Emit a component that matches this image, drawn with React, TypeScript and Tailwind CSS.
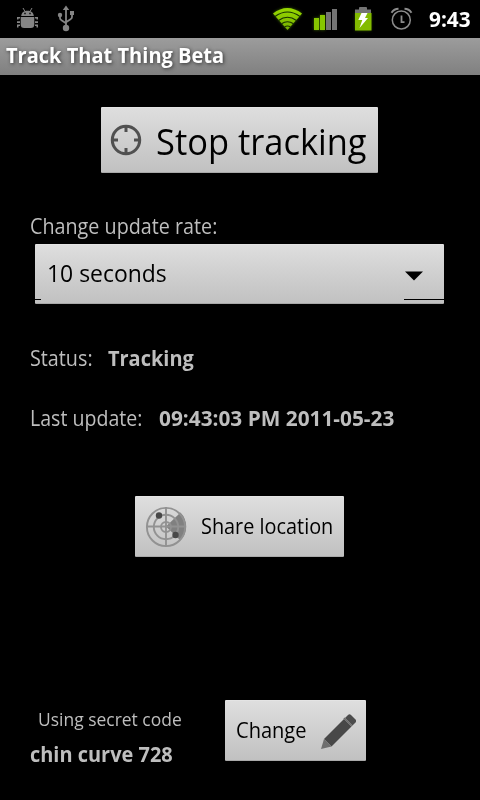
import type { ReactNode } from "react";

function Panel({ className, children }: { className: string; children: ReactNode }) {
  return (
    <div
      className={`flex items-center rounded-[1px] border-t border-b border-t-[#e4e4e4] border-b-[#a9a9a9] bg-linear-to-b from-[#dedede] to-[#c1c1c1] text-black ${className}`}
    >
      {children}
    </div>
  );
}

/* One line of text, condensed horizontally from its left edge. */
function Line({ className, children }: { className: string; children: ReactNode }) {
  return <span className={`block shrink-0 origin-left whitespace-nowrap ${className}`}>{children}</span>;
}

function BugIcon() {
  return (
    <svg className="ml-4 h-7 w-6 shrink-0" viewBox="16 5 24 28" fill="#858585">
      <path d="M21.200 16C21.500 12.500 24 10.800 27.500 10.800s6 1.700 6.300 5.200z" />
      <path d="M23 8l2 3.500M32 8l-2 3.500" fill="none" stroke="#858585" strokeWidth="1" />
      <path d="M20.700 17h13.600v7.500q0 3.500-3.500 3.500h-6.600q-3.500 0-3.500-3.500z" />
      <path d="M17 17h3v1.600h-1.500v1H17zM17 21.300h3v1.600h-3zM17 27.500v-3h3v1.500h-1.500v1.500zM38 17h-3v1.600h1.500v1H38zM38 21.300h-3v1.600h3zM38 27.500v-3h-3v1.500h1.500v1.500z" />
      <path d="M24.300 13.500h1.400M29.300 13.500h1.400" stroke="#000" strokeWidth="1.300" />
    </svg>
  );
}

function UsbIcon() {
  return (
    <svg className="ml-4 h-7 w-5 shrink-0" viewBox="56 5 20 28" fill="#858585">
      <path d="M66 5.500l3.200 4.500h-6.400z" />
      <circle cx="66" cy="28" r="3.200" />
      <circle cx="60" cy="15" r="2.200" />
      <path d="M70 11h4v4h-4z" />
      <path d="M66 9v18M60 15v3q0 1.500 1.500 2.200l4.500 3M72 14v3q0 1.500-1.500 2.200l-4.500 3" fill="none" stroke="#858585" strokeWidth="1.800" />
    </svg>
  );
}

function WifiIcon() {
  return (
    <svg className="h-[38px] w-9 shrink-0" viewBox="269 0 36 38">
      <defs>
        <linearGradient id="lime" x1="0" y1="0" x2="0" y2="1">
          <stop offset="0" stopColor="#98d800" />
          <stop offset="1" stopColor="#75b000" />
        </linearGradient>
        <filter id="glow" x="-30%" y="-30%" width="160%" height="160%">
          <feGaussianBlur stdDeviation="1.500" />
        </filter>
      </defs>
      <path d="M273 13.500Q287.300 2.500 302 13.500L287.500 30z" fill="#5c9900" opacity=".6" filter="url(#glow)" />
      <path d="M273 13.500Q287.300 2.500 302 13.500L287.500 30z" fill="url(#lime)" />
      <g fill="none" stroke="#173000" strokeWidth="1.100">
        <path d="M275 16.500q12.400-9 25 0" />
        <path d="M278.500 20.500q9-6.500 18 0" />
        <path d="M281.500 23.800q6-4 12 0" />
        <path d="M284.500 27q3-2 6 0" />
      </g>
    </svg>
  );
}

function SignalIcon() {
  return (
    <svg className="ml-1 h-[38px] w-8 shrink-0" viewBox="309 0 32 38">
      <path d="M314 18h5v12h-5zM320 15h5v15h-5z" fill="#5c9900" opacity=".7" filter="url(#glow)" />
      <path d="M314 18h5v12h-5zM320 15h5v15h-5z" fill="#87c600" />
      <path d="M326 12h5v18h-5zM332 9h5v21h-5z" fill="#747474" />
    </svg>
  );
}

function BatteryIcon() {
  return (
    <svg className="ml-2 h-[38px] w-7 shrink-0" viewBox="349 0 28 38">
      <path d="M355 12.500h16v18h-16z" fill="#5c9900" opacity=".5" filter="url(#glow)" />
      <path d="M355 9.500h4V8q0-1 1-1h6q1 0 1 1v1.500h4V13h-16z" fill="#747474" />
      <path d="M355 13h16.500v17.500H355z" fill="#83bb00" />
      <path d="M361.500 13h6l-2.500 5h3l-8.500 10 2.800-8h-4z" fill="#fff" />
    </svg>
  );
}

function AlarmIcon() {
  return (
    <svg className="ml-2.5 h-[38px] w-7 shrink-0" viewBox="387 0 28 38" fill="none" stroke="#8c8c8c" strokeWidth="1.500">
      <circle cx="401.300" cy="20" r="9" />
      <path d="M401.500 15.500v6.700h3" strokeWidth="1.800" />
      <path d="M391.500 12.700q2.500-4 7-4M411.500 12.700q-2.500-4-7-4" strokeWidth="1.900" />
    </svg>
  );
}

function CrosshairIcon() {
  return (
    <svg className="ml-[9px] h-8 w-8 shrink-0" viewBox="110 124 32 32" fill="none" stroke="#505050">
      <circle cx="126" cy="140" r="13.700" strokeWidth="3" />
      <path d="M126 126v6M126 148v6M112 140h6M134 140h6" strokeWidth="3" />
    </svg>
  );
}

function RadarIcon() {
  return (
    <svg className="ml-[10px] h-[42px] w-[42px] shrink-0" viewBox="145 505 42 42" fill="none" stroke="#929292">
      <path d="M166 525.500L180.500 511.500A20 20 0 0 1 180.500 539.500z" fill="#808080" stroke="none" />
      <g strokeWidth="1.900">
        <circle cx="166" cy="526" r="19.100" />
        <circle cx="166" cy="526" r="12.200" />
        <circle cx="166" cy="526" r="5" />
        <path d="M166 506v39M146.500 525.500h39" />
      </g>
      <circle cx="159" cy="514.500" r="3.200" fill="#484848" stroke="none" />
      <circle cx="175.500" cy="534" r="3.200" fill="#484848" stroke="none" />
    </svg>
  );
}

function PencilIcon() {
  return (
    <svg className="h-9 w-9 shrink-0" viewBox="320 712 36 36">
      <path d="M324 738l20-20 7.500 7.500-20 20z" fill="#484848" />
      <path d="M345 717l3-3q1.500-1.500 3 0l4.500 4.500q1.500 1.500 0 3l-3 3z" fill="#4c4c4c" />
      <path d="M344 717l8 8" stroke="#6c6c6c" strokeWidth="1.700" />
      <path d="M324 738l7.500 7.500L321 748z" fill="#6f6f6f" />
    </svg>
  );
}

export default function App() {
  return (
    <main className="flex h-[800px] w-[480px] flex-col overflow-hidden bg-black font-['Open_Sans','Noto_Sans',sans-serif] text-[21px] leading-7 text-[#bebebe]">
      <header className="flex h-[38px] shrink-0 items-center">
        <BugIcon />
        <UsbIcon />
        <div className="ml-auto flex items-center">
          <WifiIcon />
          <SignalIcon />
          <BatteryIcon />
          <AlarmIcon />
          <div className="ml-[14px] w-[51px]">
            <Line className="scale-x-[0.99] font-bold text-white">9:43</Line>
          </div>
        </div>
      </header>
      <div className="flex h-[37px] shrink-0 items-center bg-linear-to-b from-[#9c9c9c] to-[#808080] pb-1 pl-[6px]">
        <Line className="scale-x-[0.954] font-bold text-white [text-shadow:1px_1px_4px_#333]">Track That Thing Beta</Line>
      </div>

      <Panel className="mt-8 ml-[101px] h-[66px] w-[277px] shrink-0">
        <CrosshairIcon />
        <div className="ml-[14px] h-[46px] w-[210px]">
          <Line className="scale-x-[0.957] text-[36px] leading-[50px]">Stop tracking</Line>
        </div>
      </Panel>

      <div className="mt-[39px] ml-[30px] h-7">
        <Line className="scale-x-[0.94]">Change update rate:</Line>
      </div>
      <Panel className="mt-[4px] ml-[35px] h-[60px] w-[409px] shrink-0 flex-wrap content-between">
        <div className="mt-[11px] flex h-9 w-full items-center justify-between pl-3 pr-[20px]">
          <Line className="scale-x-[0.955] pb-[2px] text-[24px]">10 seconds</Line>
          <svg className="mt-[3px] h-[10px] w-5" viewBox="0 0 20 10">
            <path d="M1 .5h18L10 9.500z" />
          </svg>
        </div>
        <div className="mb-[3px] flex h-px w-full justify-between">
          <i className="h-px w-[6px] bg-black" />
          <i className="h-px w-10 bg-black" />
        </div>
      </Panel>

      <div className="mt-[40px] ml-[30px] flex h-7">
        <div className="w-[78px]">
          <Line className="scale-x-[0.94]">Status:</Line>
        </div>
        <Line className="scale-x-[0.95] font-bold">Tracking</Line>
      </div>
      <div className="mt-8 ml-[30px] flex h-7">
        <div className="w-[129px]">
          <Line className="scale-x-[0.932]">Last update:</Line>
        </div>
        <Line className="scale-x-[0.991] font-bold">09:43:03 PM 2011-05-23</Line>
      </div>

      <Panel className="mt-[64px] ml-[135px] h-[61px] w-[209px] shrink-0">
        <RadarIcon />
        <div className="ml-[14px] w-[133px] pb-[2px]">
          <Line className="scale-x-[0.946]">Share location</Line>
        </div>
      </Panel>

      <footer className="mt-[143px] flex">
        <div className="ml-[30px] w-[195px] pt-[5px]">
          <div className="pl-2">
            <Line className="scale-x-[0.97] text-[18px]">Using secret code</Line>
          </div>
          <div className="mt-[7px]">
            <Line className="scale-x-[0.95] font-bold">chin curve 728</Line>
          </div>
        </div>
        <Panel className="h-[61px] w-[141px]">
          <div className="ml-[11px] w-[84px] pb-[2px]">
            <Line className="scale-x-[0.955]">Change</Line>
          </div>
          <PencilIcon />
        </Panel>
      </footer>
    </main>
  );
}
